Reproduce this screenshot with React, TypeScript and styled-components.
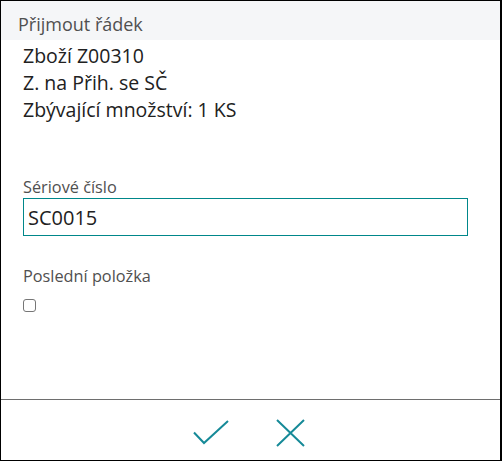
import React, { useState } from "react";
import styled, { createGlobalStyle } from "styled-components";

const GlobalStyle = createGlobalStyle`
  html, body {
    margin: 0;
    padding: 0;
    background: #ffffff;
  }
  body {
    font-family: "Open Sans", "Noto Sans", sans-serif;
  }
`;

const Dialog = styled.div`
  box-sizing: border-box;
  width: 502px;
  height: 461px;
  display: flex;
  flex-direction: column;
  border-top: 1px solid #000;
  border-left: 1px solid #000;
  border-right: 2px solid #000;
  border-bottom: 1px solid #000;
  background: #fff;
  color: #212121;
`;

const Header = styled.div`
  height: 39px;
  box-sizing: border-box;
  padding: 11px 0 0 17px;
  background: #f5f6f8;
  font-size: 18px;
  line-height: 24px;
  color: #505050;
`;

const Body = styled.div`
  flex: 1;
  padding: 2px 0 0 22px;
`;

const InfoLine = styled.div`
  font-size: 19.5px;
  line-height: 27px;
  color: #212121;
`;

const FieldLabel = styled.div<{ $gap: number }>`
  margin-top: ${({ $gap }) => $gap}px;
  font-size: 16.3px;
  line-height: 22px;
  color: #505050;
`;

const TextInput = styled.input`
  display: block;
  box-sizing: border-box;
  width: 445px;
  height: 38px;
  margin: 0;
  padding: 0 4px;
  border: 1px solid #00878a;
  border-radius: 0;
  outline: none;
  font-family: "Open Sans", "Noto Sans", sans-serif;
  font-size: 20px;
  color: #212121;
  background: #fff;
`;

const CheckBox = styled.button<{ $on: boolean }>`
  display: block;
  box-sizing: border-box;
  width: 13px;
  height: 13px;
  margin-top: 12px;
  padding: 0;
  border: 1px solid #767676;
  border-radius: 3px;
  background: ${({ $on }) => ($on ? "#00878a" : "#fff")};
  cursor: pointer;
`;

const Footer = styled.div`
  height: 61px;
  box-sizing: border-box;
  border-top: 1px solid #6e6e6e;
  display: flex;
  justify-content: center;
  align-items: center;
  gap: 47px;
  padding: 5px 3px 0 0;
`;

const IconButton = styled.button`
  display: flex;
  align-items: center;
  justify-content: center;
  padding: 0;
  border: none;
  background: transparent;
  cursor: pointer;
  color: #168a98;
`;

const App: React.FC = () => {
  const [serial, setSerial] = useState("SC0015");
  const [last, setLast] = useState(false);

  return (
    <>
      <GlobalStyle />
      <Dialog>
        <Header>Přijmout řádek</Header>
        <Body>
          <InfoLine>Zboží Z00310</InfoLine>
          <InfoLine>Z. na Přih. se SČ</InfoLine>
          <InfoLine>Zbývající množství: 1 KS</InfoLine>

          <FieldLabel $gap={53}>Sériové číslo</FieldLabel>
          <TextInput value={serial} onChange={(e) => setSerial(e.target.value)} />

          <FieldLabel $gap={29}>Poslední položka</FieldLabel>
          <CheckBox $on={last} onClick={() => setLast(!last)} aria-label="Poslední položka" />
        </Body>
        <Footer>
          <IconButton aria-label="OK">
            <svg width="36" height="26" viewBox="0 0 36 26">
              <path d="M1 12.5 L11 23 L35 1" fill="none" stroke="currentColor" strokeWidth="2" />
            </svg>
          </IconButton>
          <IconButton aria-label="Zrušit">
            <svg width="29" height="28" viewBox="0 0 29 28">
              <path d="M1 1 L28 27 M28 1 L1 27" fill="none" stroke="currentColor" strokeWidth="2" />
            </svg>
          </IconButton>
        </Footer>
      </Dialog>
    </>
  );
};

export default App;
